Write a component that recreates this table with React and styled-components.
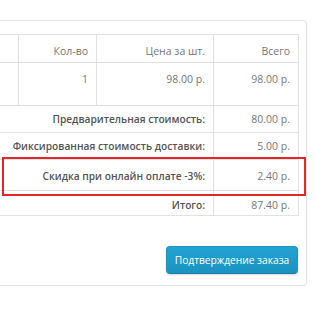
import React from 'react'
import styled, { createGlobalStyle } from 'styled-components'

const GlobalStyle = createGlobalStyle`
  html, body {
    margin: 0;
    padding: 0;
    background: #fff;
    overflow: hidden;
  }
  body {
    font-family: 'Open Sans', 'Liberation Sans', sans-serif;
    font-size: 10.5px;
    color: #777;
  }
`

const Panel = styled.div`
  position: relative;
  box-sizing: border-box;
  width: 337px;
  margin: 20px 0 0 -30px;
  padding: 13px 10px 11px 10px;
  background: #fff;
  border: 1px solid #e4e4e4;
  border-radius: 4px;
  box-shadow: 0 1px 2px rgba(0, 0, 0, 0.06);
`

const Table = styled.table`
  width: 317px;
  border-collapse: collapse;
  table-layout: fixed;
  td {
    border: 1px solid #e2e2e2;
    padding: 0 8px;
    text-align: right;
    line-height: 16px;
    white-space: nowrap;
  }
`

const HeadCell = styled.td`
  height: 23px;
  vertical-align: middle;
  padding-top: 4px !important;
`

const ItemCell = styled.td`
  height: 34px;
  vertical-align: top;
  padding-top: 8px !important;
`

const SumRow = styled.tr`
  td {
    height: ${p => p.$h}px;
    vertical-align: middle;
    padding-top: ${p => p.$pt || 0}px;
  }
`

const Label = styled.td`
  font-weight: 600;
  font-size: 10.2px;
  color: #555;
`

/* red frame drawn over the discount row */
const Highlight = styled.div`
  position: absolute;
  left: 31px;
  right: 0;
  top: 136px;
  height: 35px;
  border: 2px solid #e2262a;
`

const Actions = styled.div`
  display: flex;
  justify-content: flex-end;
  width: 317px;
  margin-top: 30px;
`

const Button = styled.button`
  width: 132px;
  height: 28px;
  padding: 0;
  font-family: 'Open Sans', 'Liberation Sans', sans-serif;
  font-size: 10.2px;
  color: #fff;
  background: linear-gradient(to bottom, #22a3d3, #1b93c0);
  border: 1px solid #1d92be;
  border-bottom-color: #177ba2;
  border-radius: 4px;
  box-shadow: 0 1px 2px rgba(0, 0, 0, 0.15);
`

const totals = [
  { label: 'Предварительная стоимость:', value: '80.00 р.', h: 26 },
  { label: 'Фиксированная стоимость доставки:', value: '5.00 р.', h: 26 },
  { label: 'Скидка при онлайн оплате -3%:', value: '2.40 р.', h: 29, pt: 1 },
  { label: 'Итого:', value: '87.40 р.', h: 21, pt: 3 },
]

export default function App() {
  return (
    <>
      <GlobalStyle />
      <Panel>
        <Table>
          <colgroup>
            <col style={{ width: 37 }} />
            <col style={{ width: 78 }} />
            <col style={{ width: 117 }} />
            <col style={{ width: 85 }} />
          </colgroup>
          <thead>
            <tr>
              <HeadCell></HeadCell>
              <HeadCell>Кол-во</HeadCell>
              <HeadCell>Цена за шт.</HeadCell>
              <HeadCell>Всего</HeadCell>
            </tr>
          </thead>
          <tbody>
            <tr>
              <ItemCell></ItemCell>
              <ItemCell>1</ItemCell>
              <ItemCell>98.00 р.</ItemCell>
              <ItemCell>98.00 р.</ItemCell>
            </tr>
            {totals.map(t => (
              <SumRow key={t.label} $h={t.h} $pt={t.pt}>
                <Label colSpan={3}>{t.label}</Label>
                <td>{t.value}</td>
              </SumRow>
            ))}
          </tbody>
        </Table>
        <Highlight />
        <Actions>
          <Button>Подтверждение заказа</Button>
        </Actions>
      </Panel>
    </>
  )
}
